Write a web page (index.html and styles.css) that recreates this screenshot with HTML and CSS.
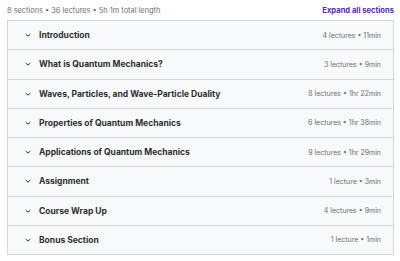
FILE: index.html
```html
<!DOCTYPE html>
<html lang="en">
<head>
	<meta charset="UTF-8">
	<title>Course content</title>
	<link rel="stylesheet" href="styles.css">
</head>
<body>
	<div class="content">
		<div class="head">
			<span class="meta">8 sections • 36 lectures • 5h 1m total length</span>
			<span class="expand">Expand all sections</span>
		</div>
		<ul class="sections">
			<li class="row"><span class="chev"><svg viewBox="0 0 10 10"><path d="M2.7 4l2.3 2.2 2.3-2.2"/></svg></span><span class="title">Introduction</span><span class="info">4 lectures • 11min</span></li>
			<li class="row"><span class="chev"><svg viewBox="0 0 10 10"><path d="M2.7 4l2.3 2.2 2.3-2.2"/></svg></span><span class="title">What is Quantum Mechanics?</span><span class="info">3 lectures • 9min</span></li>
			<li class="row"><span class="chev"><svg viewBox="0 0 10 10"><path d="M2.7 4l2.3 2.2 2.3-2.2"/></svg></span><span class="title">Waves, Particles, and Wave-Particle Duality</span><span class="info">8 lectures • 1hr 22min</span></li>
			<li class="row"><span class="chev"><svg viewBox="0 0 10 10"><path d="M2.7 4l2.3 2.2 2.3-2.2"/></svg></span><span class="title">Properties of Quantum Mechanics</span><span class="info">6 lectures • 1hr 38min</span></li>
			<li class="row"><span class="chev"><svg viewBox="0 0 10 10"><path d="M2.7 4l2.3 2.2 2.3-2.2"/></svg></span><span class="title">Applications of Quantum Mechanics</span><span class="info">9 lectures • 1hr 29min</span></li>
			<li class="row"><span class="chev"><svg viewBox="0 0 10 10"><path d="M2.7 4l2.3 2.2 2.3-2.2"/></svg></span><span class="title">Assignment</span><span class="info">1 lecture • 3min</span></li>
			<li class="row"><span class="chev"><svg viewBox="0 0 10 10"><path d="M2.7 4l2.3 2.2 2.3-2.2"/></svg></span><span class="title">Course Wrap Up</span><span class="info">4 lectures • 9min</span></li>
			<li class="row"><span class="chev"><svg viewBox="0 0 10 10"><path d="M2.7 4l2.3 2.2 2.3-2.2"/></svg></span><span class="title">Bonus Section</span><span class="info">1 lecture • 1min</span></li>
		</ul>
	</div>
</body>
</html>
```

FILE: styles.css
```css
*{ margin:0; padding:0; list-style:none; box-sizing:border-box;}
body{ background:#fff; font-family:Inter, "Noto Sans", sans-serif; color:#2d2f31;}
.content{ padding:2px 6px 0 7px;}
.head{ display:flex; justify-content:space-between; align-items:center; height:16px; margin-bottom:2px;}
.meta{ font-size:7.4px; color:#6a6f73;}
.expand{ font-size:7.6px; font-weight:700; color:#5624d0;}
.sections{ border:1px solid #d1d7dc; border-bottom:none;}
.row{ display:flex; align-items:center; height:29.25px; background:#f7f9fa; border-bottom:1px solid #d1d7dc; padding:0 12px 0 15px;}
.chev{ width:10px; height:10px; display:flex; margin-right:6px;}
.chev svg{ width:10px; height:10px; fill:none; stroke:#2d2f31; stroke-width:1;}
.title{ flex:1; font-size:8.5px; font-weight:700;}
.info{ font-size:7px; color:#6a6f73;}
```
